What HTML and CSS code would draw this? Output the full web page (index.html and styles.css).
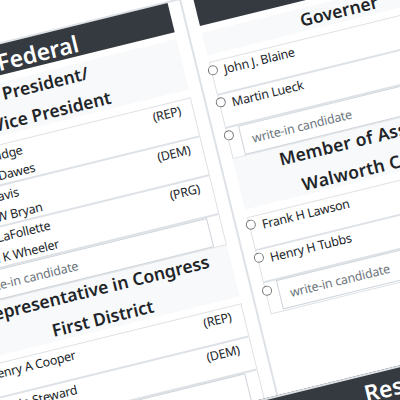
FILE: index.html
```
<!DOCTYPE html>
<html lang="en">
<head>
<meta charset="utf-8">
<title>Ballot</title>
<link rel="stylesheet" href="styles.css">
</head>
<body>
<main class="ballot">
  <section class="column">
    <h1 class="section">Federal</h1>
    <h2 class="office"><span>President/<br>Vice President</span></h2>
    <div class="race">
      <div class="choice pair"><i class="oval"></i><span>Calvin Coolidge<br>Charles G Dawes</span><span>(REP)</span></div>
      <div class="choice pair"><i class="oval"></i><span>John W Davis<br>Charles W Bryan</span><span>(DEM)</span></div>
      <div class="choice pair"><i class="oval"></i><span>Robert LaFollette<br>Burton K Wheeler</span><span>(PRG)</span></div>
      <div class="choice write"><i class="oval"></i><div class="field">write-in candidate</div></div>
    </div>
    <h2 class="office"><span>Representative in Congress<br>First District</span></h2>
    <div class="race">
      <div class="choice"><i class="oval"></i><span>Henry A Cooper</span><span>(REP)</span></div>
      <div class="choice"><i class="oval"></i><span>Calvin Steward</span><span>(DEM)</span></div>
      <div class="choice write"><i class="oval"></i><div class="field">write-in candidate</div></div>
    </div>
  </section>
  <section class="column right">
    <div class="upper">
      <h1 class="section">State</h1>
      <h2 class="office"><span>Governer</span></h2>
      <div class="race">
        <div class="choice"><i class="oval"></i><span>John J. Blaine</span></div>
        <div class="choice"><i class="oval"></i><span>Martin Lueck</span></div>
        <div class="choice write"><i class="oval"></i><div class="field">write-in candidate</div></div>
      </div>
      <h2 class="office local"><span>Member of Assembly<br>Walworth County</span></h2>
      <div class="race">
        <div class="choice"><i class="oval"></i><span>Frank H Lawson</span></div>
        <div class="choice"><i class="oval"></i><span>Henry H Tubbs</span></div>
        <div class="choice write"><i class="oval"></i><div class="field">write-in candidate</div></div>
      </div>
    </div>
    <h1 class="section wide">Resolutions</h1>
  </section>
</main>
</body>
</html>
```
FILE: styles.css
```
* { box-sizing: border-box; }
html, body { margin: 0; height: 100%; overflow: hidden; background: #fff; }
.ballot {
  display: grid;
  grid-template-columns: 301px 303px;
  width: 604px;
  height: 520px;
  margin-left: -127px;
  padding-top: 41px;
  transform: rotate(-13.8deg);
  transform-origin: 127px 0;
  font-family: "Noto Sans", "Open Sans", sans-serif;
  color: #212529;
}
.column { border-top: 2px solid #dee2e6; padding: 0 12px 0 13px; }
.right { border-left: 2px solid #dee2e6; padding: 0 12px; }
.upper { height: 407px; }
.section {
  margin: 0 0 7px;
  height: 30px;
  background: #343a40;
  color: #fff;
  font-size: 23px;
  font-weight: 600;
  line-height: 34px;
  text-align: center;
}
.wide {
  position: relative;
  margin: 0 -12px 0 -40px;
  padding-left: 26px;
  height: 40px;
  border-top: 2px solid #dee2e6;
}
.office {
  margin: 0 0 7.5px;
  background: #f8f9fa;
  font-size: 17.5px;
  font-weight: 600;
  line-height: 29.6px;
  text-align: center;
}
.office span { display: block; margin: -3px -20px -4px; position: relative; top: -.5px; }
.office::before, .office::after { content: ""; display: table; }
.local span { padding-right: 2px; top: 0; letter-spacing: .25px; }
.race { border: 1px solid #dee2e6; border-bottom: 0; }
.choice {
  position: relative;
  display: flex;
  justify-content: space-between;
  height: 33.8px;
  padding: 0 12px 0 12px;
  border-bottom: 2px solid #dee2e6;
  font-size: 12.5px;
  letter-spacing: -.25px;
  line-height: 19.5px;
}
.pair { height: 40.1px; }
.pair > span { padding-top: .5px; }
.write { height: 31.5px; border-bottom-width: 1px; letter-spacing: -.2px; }
.field {
  width: 100%;
  height: 30px;
  border: 1px solid #ced4da;
  padding-left: 10px;
  color: #6c757d;
  line-height: 30px;
}
.oval {
  position: absolute;
  left: -4.5px;
  top: 2.5px;
  width: 10px;
  height: 10px;
  border: 1px solid #767676;
  border-radius: 50%;
  background: #fff;
}
```
